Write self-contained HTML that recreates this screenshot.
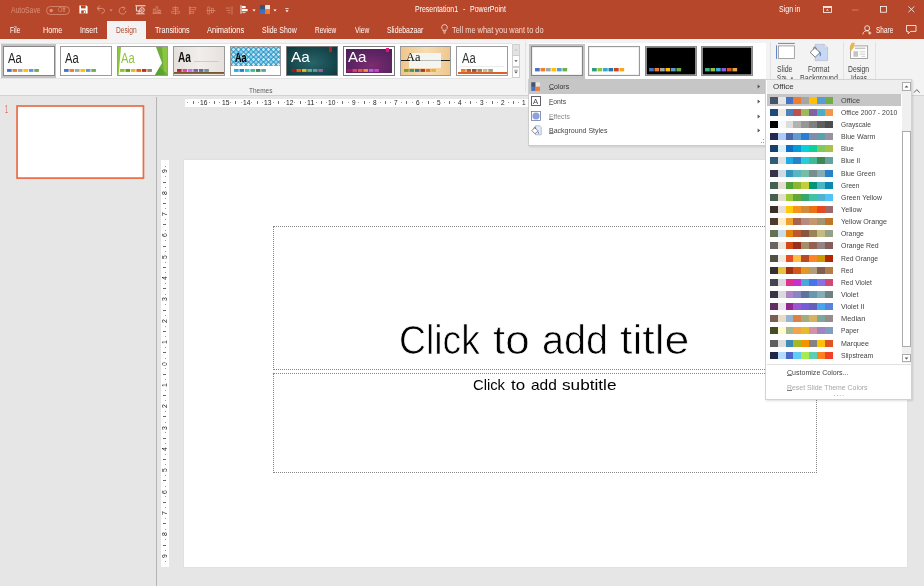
<!DOCTYPE html>
<html lang="en"><head><meta charset="utf-8"><title>Presentation1 - PowerPoint</title>
<style>
html,body{margin:0;padding:0;}
body{width:924px;height:586px;overflow:hidden;position:relative;background:#E6E6E6;font-family:"Liberation Sans",sans-serif;}
.a{position:absolute;box-sizing:border-box;}
.t{position:absolute;white-space:pre;transform-origin:0 50%;font-family:"Liberation Sans",sans-serif;}
.sw{position:absolute;height:7px;width:63.2px;left:769.8px;}
.sw i{position:absolute;top:0;height:100%;width:7.9px;}
.g{position:static;margin:0;padding:0;}
.chips{position:absolute;height:3px;}
.chips i{position:absolute;top:0;height:100%;width:4.5px;}
.th{position:absolute;top:46.3px;height:29.3px;width:51.7px;box-sizing:border-box;border:1px solid #9a9a9a;background:#fff;overflow:hidden;}
u{text-decoration:underline;text-decoration-thickness:0.5px;text-underline-offset:0.3px;text-decoration-color:rgba(80,80,80,0.75);}
</style></head><body><div id="root" style="position:absolute;left:0;top:0;width:924px;height:586px;will-change:transform;">
<div class="a" style="left:0px;top:0px;width:924px;height:39px;background:#B7472A;"></div>
<div class="a" style="left:107px;top:21px;width:39px;height:18.5px;background:#F3F3F3;"></div>
<div class="a" style="left:0px;top:39px;width:924px;height:56px;background:#F3F3F3;"></div>
<div class="a" style="left:0px;top:95px;width:924px;height:1px;background:#D2D2D2;"></div>
<div class="a" style="left:156px;top:97px;width:1px;height:489px;background:#B4B4B4;"></div>
<svg class="a" style="left:14px;top:103px" width="134" height="80" viewBox="0 0 134 80"><rect x="3.05" y="3" width="126.4" height="72.1" fill="#fff" stroke="#EC6C45" stroke-width="1.7"/></svg>
<div class="a" style="left:184.5px;top:99px;width:722.5px;height:8px;background:#fff;"></div>
<div class="a" style="left:161px;top:160px;width:8px;height:407px;background:#fff;"></div>
<div class="a" style="left:184px;top:160px;width:722.6px;height:407px;background:#fff;box-shadow:0 0 0 0.5px #dcdcdc;"></div>
<div class="a" style="left:273px;top:226px;width:544px;height:144px;border:1px dotted #858585;"></div>
<div class="a" style="left:273px;top:373px;width:544px;height:99.5px;border:1px dotted #858585;"></div>
<div class="a" style="left:187.4px;top:102.2px;width:1px;height:1px;background:#a0a0a0"></div><div class="a" style="left:192.7px;top:101px;width:1px;height:3px;background:#707070"></div><div class="a" style="left:198.1px;top:102.2px;width:1px;height:1px;background:#a0a0a0"></div><div class="a" style="left:208.7px;top:102.2px;width:1px;height:1px;background:#a0a0a0"></div><div class="a" style="left:214.1px;top:101px;width:1px;height:3px;background:#707070"></div><div class="a" style="left:219.4px;top:102.2px;width:1px;height:1px;background:#a0a0a0"></div><div class="a" style="left:230.1px;top:102.2px;width:1px;height:1px;background:#a0a0a0"></div><div class="a" style="left:235.4px;top:101px;width:1px;height:3px;background:#707070"></div><div class="a" style="left:240.8px;top:102.2px;width:1px;height:1px;background:#a0a0a0"></div><div class="a" style="left:251.4px;top:102.2px;width:1px;height:1px;background:#a0a0a0"></div><div class="a" style="left:256.8px;top:101px;width:1px;height:3px;background:#707070"></div><div class="a" style="left:262.1px;top:102.2px;width:1px;height:1px;background:#a0a0a0"></div><div class="a" style="left:272.8px;top:102.2px;width:1px;height:1px;background:#a0a0a0"></div><div class="a" style="left:278.1px;top:101px;width:1px;height:3px;background:#707070"></div><div class="a" style="left:283.5px;top:102.2px;width:1px;height:1px;background:#a0a0a0"></div><div class="a" style="left:294.1px;top:102.2px;width:1px;height:1px;background:#a0a0a0"></div><div class="a" style="left:299.5px;top:101px;width:1px;height:3px;background:#707070"></div><div class="a" style="left:304.8px;top:102.2px;width:1px;height:1px;background:#a0a0a0"></div><div class="a" style="left:315.5px;top:102.2px;width:1px;height:1px;background:#a0a0a0"></div><div class="a" style="left:320.8px;top:101px;width:1px;height:3px;background:#707070"></div><div class="a" style="left:326.2px;top:102.2px;width:1px;height:1px;background:#a0a0a0"></div><div class="a" style="left:336.8px;top:102.2px;width:1px;height:1px;background:#a0a0a0"></div><div class="a" style="left:342.2px;top:101px;width:1px;height:3px;background:#707070"></div><div class="a" style="left:347.5px;top:102.2px;width:1px;height:1px;background:#a0a0a0"></div><div class="a" style="left:358.2px;top:102.2px;width:1px;height:1px;background:#a0a0a0"></div><div class="a" style="left:363.5px;top:101px;width:1px;height:3px;background:#707070"></div><div class="a" style="left:368.9px;top:102.2px;width:1px;height:1px;background:#a0a0a0"></div><div class="a" style="left:379.5px;top:102.2px;width:1px;height:1px;background:#a0a0a0"></div><div class="a" style="left:384.9px;top:101px;width:1px;height:3px;background:#707070"></div><div class="a" style="left:390.2px;top:102.2px;width:1px;height:1px;background:#a0a0a0"></div><div class="a" style="left:400.9px;top:102.2px;width:1px;height:1px;background:#a0a0a0"></div><div class="a" style="left:406.2px;top:101px;width:1px;height:3px;background:#707070"></div><div class="a" style="left:411.6px;top:102.2px;width:1px;height:1px;background:#a0a0a0"></div><div class="a" style="left:422.2px;top:102.2px;width:1px;height:1px;background:#a0a0a0"></div><div class="a" style="left:427.6px;top:101px;width:1px;height:3px;background:#707070"></div><div class="a" style="left:432.9px;top:102.2px;width:1px;height:1px;background:#a0a0a0"></div><div class="a" style="left:443.6px;top:102.2px;width:1px;height:1px;background:#a0a0a0"></div><div class="a" style="left:448.9px;top:101px;width:1px;height:3px;background:#707070"></div><div class="a" style="left:454.3px;top:102.2px;width:1px;height:1px;background:#a0a0a0"></div><div class="a" style="left:464.9px;top:102.2px;width:1px;height:1px;background:#a0a0a0"></div><div class="a" style="left:470.3px;top:101px;width:1px;height:3px;background:#707070"></div><div class="a" style="left:475.6px;top:102.2px;width:1px;height:1px;background:#a0a0a0"></div><div class="a" style="left:486.3px;top:102.2px;width:1px;height:1px;background:#a0a0a0"></div><div class="a" style="left:491.6px;top:101px;width:1px;height:3px;background:#707070"></div><div class="a" style="left:497.0px;top:102.2px;width:1px;height:1px;background:#a0a0a0"></div><div class="a" style="left:507.6px;top:102.2px;width:1px;height:1px;background:#a0a0a0"></div><div class="a" style="left:513.0px;top:101px;width:1px;height:3px;background:#707070"></div><div class="a" style="left:518.3px;top:102.2px;width:1px;height:1px;background:#a0a0a0"></div><div class="a" style="left:529.0px;top:102.2px;width:1px;height:1px;background:#a0a0a0"></div><div class="a" style="left:534.3px;top:101px;width:1px;height:3px;background:#707070"></div><div class="a" style="left:539.7px;top:102.2px;width:1px;height:1px;background:#a0a0a0"></div><div class="a" style="left:550.3px;top:102.2px;width:1px;height:1px;background:#a0a0a0"></div><div class="a" style="left:555.7px;top:101px;width:1px;height:3px;background:#707070"></div><div class="a" style="left:561.0px;top:102.2px;width:1px;height:1px;background:#a0a0a0"></div><div class="a" style="left:571.7px;top:102.2px;width:1px;height:1px;background:#a0a0a0"></div><div class="a" style="left:577.0px;top:101px;width:1px;height:3px;background:#707070"></div><div class="a" style="left:582.4px;top:102.2px;width:1px;height:1px;background:#a0a0a0"></div><div class="a" style="left:593.0px;top:102.2px;width:1px;height:1px;background:#a0a0a0"></div><div class="a" style="left:598.4px;top:101px;width:1px;height:3px;background:#707070"></div><div class="a" style="left:603.7px;top:102.2px;width:1px;height:1px;background:#a0a0a0"></div><div class="a" style="left:614.4px;top:102.2px;width:1px;height:1px;background:#a0a0a0"></div><div class="a" style="left:619.7px;top:101px;width:1px;height:3px;background:#707070"></div><div class="a" style="left:625.1px;top:102.2px;width:1px;height:1px;background:#a0a0a0"></div><div class="a" style="left:635.7px;top:102.2px;width:1px;height:1px;background:#a0a0a0"></div><div class="a" style="left:641.1px;top:101px;width:1px;height:3px;background:#707070"></div><div class="a" style="left:646.4px;top:102.2px;width:1px;height:1px;background:#a0a0a0"></div><div class="a" style="left:657.1px;top:102.2px;width:1px;height:1px;background:#a0a0a0"></div><div class="a" style="left:662.4px;top:101px;width:1px;height:3px;background:#707070"></div><div class="a" style="left:667.8px;top:102.2px;width:1px;height:1px;background:#a0a0a0"></div><div class="a" style="left:678.4px;top:102.2px;width:1px;height:1px;background:#a0a0a0"></div><div class="a" style="left:683.8px;top:101px;width:1px;height:3px;background:#707070"></div><div class="a" style="left:689.1px;top:102.2px;width:1px;height:1px;background:#a0a0a0"></div><div class="a" style="left:699.8px;top:102.2px;width:1px;height:1px;background:#a0a0a0"></div><div class="a" style="left:705.1px;top:101px;width:1px;height:3px;background:#707070"></div><div class="a" style="left:710.5px;top:102.2px;width:1px;height:1px;background:#a0a0a0"></div><div class="a" style="left:721.1px;top:102.2px;width:1px;height:1px;background:#a0a0a0"></div><div class="a" style="left:726.5px;top:101px;width:1px;height:3px;background:#707070"></div><div class="a" style="left:731.8px;top:102.2px;width:1px;height:1px;background:#a0a0a0"></div><div class="a" style="left:742.5px;top:102.2px;width:1px;height:1px;background:#a0a0a0"></div><div class="a" style="left:747.8px;top:101px;width:1px;height:3px;background:#707070"></div><div class="a" style="left:753.2px;top:102.2px;width:1px;height:1px;background:#a0a0a0"></div><div class="a" style="left:763.8px;top:102.2px;width:1px;height:1px;background:#a0a0a0"></div><div class="a" style="left:769.2px;top:101px;width:1px;height:3px;background:#707070"></div><div class="a" style="left:774.5px;top:102.2px;width:1px;height:1px;background:#a0a0a0"></div><div class="a" style="left:785.2px;top:102.2px;width:1px;height:1px;background:#a0a0a0"></div><div class="a" style="left:790.5px;top:101px;width:1px;height:3px;background:#707070"></div><div class="a" style="left:795.9px;top:102.2px;width:1px;height:1px;background:#a0a0a0"></div><div class="a" style="left:806.5px;top:102.2px;width:1px;height:1px;background:#a0a0a0"></div><div class="a" style="left:811.9px;top:101px;width:1px;height:3px;background:#707070"></div><div class="a" style="left:817.2px;top:102.2px;width:1px;height:1px;background:#a0a0a0"></div><div class="a" style="left:827.9px;top:102.2px;width:1px;height:1px;background:#a0a0a0"></div><div class="a" style="left:833.2px;top:101px;width:1px;height:3px;background:#707070"></div><div class="a" style="left:838.6px;top:102.2px;width:1px;height:1px;background:#a0a0a0"></div><div class="a" style="left:849.2px;top:102.2px;width:1px;height:1px;background:#a0a0a0"></div><div class="a" style="left:854.6px;top:101px;width:1px;height:3px;background:#707070"></div><div class="a" style="left:859.9px;top:102.2px;width:1px;height:1px;background:#a0a0a0"></div><div class="a" style="left:870.6px;top:102.2px;width:1px;height:1px;background:#a0a0a0"></div><div class="a" style="left:875.9px;top:101px;width:1px;height:3px;background:#707070"></div><div class="a" style="left:881.3px;top:102.2px;width:1px;height:1px;background:#a0a0a0"></div><div class="a" style="left:891.9px;top:102.2px;width:1px;height:1px;background:#a0a0a0"></div><div class="a" style="left:897.3px;top:101px;width:1px;height:3px;background:#707070"></div><div class="a" style="left:902.6px;top:102.2px;width:1px;height:1px;background:#a0a0a0"></div><div class="a" style="top:165.5px;left:164.6px;width:1px;height:1px;background:#999"></div><div class="a" style="top:176.2px;left:164.6px;width:1px;height:1px;background:#999"></div><div class="a" style="top:181.5px;left:163.4px;width:3px;height:1px;background:#666"></div><div class="a" style="top:186.9px;left:164.6px;width:1px;height:1px;background:#999"></div><div class="a" style="top:197.5px;left:164.6px;width:1px;height:1px;background:#999"></div><div class="a" style="top:202.9px;left:163.4px;width:3px;height:1px;background:#666"></div><div class="a" style="top:208.2px;left:164.6px;width:1px;height:1px;background:#999"></div><div class="a" style="top:218.9px;left:164.6px;width:1px;height:1px;background:#999"></div><div class="a" style="top:224.2px;left:163.4px;width:3px;height:1px;background:#666"></div><div class="a" style="top:229.6px;left:164.6px;width:1px;height:1px;background:#999"></div><div class="a" style="top:240.2px;left:164.6px;width:1px;height:1px;background:#999"></div><div class="a" style="top:245.6px;left:163.4px;width:3px;height:1px;background:#666"></div><div class="a" style="top:250.9px;left:164.6px;width:1px;height:1px;background:#999"></div><div class="a" style="top:261.6px;left:164.6px;width:1px;height:1px;background:#999"></div><div class="a" style="top:266.9px;left:163.4px;width:3px;height:1px;background:#666"></div><div class="a" style="top:272.3px;left:164.6px;width:1px;height:1px;background:#999"></div><div class="a" style="top:282.9px;left:164.6px;width:1px;height:1px;background:#999"></div><div class="a" style="top:288.3px;left:163.4px;width:3px;height:1px;background:#666"></div><div class="a" style="top:293.6px;left:164.6px;width:1px;height:1px;background:#999"></div><div class="a" style="top:304.3px;left:164.6px;width:1px;height:1px;background:#999"></div><div class="a" style="top:309.6px;left:163.4px;width:3px;height:1px;background:#666"></div><div class="a" style="top:315.0px;left:164.6px;width:1px;height:1px;background:#999"></div><div class="a" style="top:325.6px;left:164.6px;width:1px;height:1px;background:#999"></div><div class="a" style="top:331.0px;left:163.4px;width:3px;height:1px;background:#666"></div><div class="a" style="top:336.3px;left:164.6px;width:1px;height:1px;background:#999"></div><div class="a" style="top:347.0px;left:164.6px;width:1px;height:1px;background:#999"></div><div class="a" style="top:352.3px;left:163.4px;width:3px;height:1px;background:#666"></div><div class="a" style="top:357.7px;left:164.6px;width:1px;height:1px;background:#999"></div><div class="a" style="top:368.3px;left:164.6px;width:1px;height:1px;background:#999"></div><div class="a" style="top:373.7px;left:163.4px;width:3px;height:1px;background:#666"></div><div class="a" style="top:379.0px;left:164.6px;width:1px;height:1px;background:#999"></div><div class="a" style="top:389.7px;left:164.6px;width:1px;height:1px;background:#999"></div><div class="a" style="top:395.0px;left:163.4px;width:3px;height:1px;background:#666"></div><div class="a" style="top:400.4px;left:164.6px;width:1px;height:1px;background:#999"></div><div class="a" style="top:411.0px;left:164.6px;width:1px;height:1px;background:#999"></div><div class="a" style="top:416.4px;left:163.4px;width:3px;height:1px;background:#666"></div><div class="a" style="top:421.7px;left:164.6px;width:1px;height:1px;background:#999"></div><div class="a" style="top:432.4px;left:164.6px;width:1px;height:1px;background:#999"></div><div class="a" style="top:437.7px;left:163.4px;width:3px;height:1px;background:#666"></div><div class="a" style="top:443.1px;left:164.6px;width:1px;height:1px;background:#999"></div><div class="a" style="top:453.7px;left:164.6px;width:1px;height:1px;background:#999"></div><div class="a" style="top:459.1px;left:163.4px;width:3px;height:1px;background:#666"></div><div class="a" style="top:464.4px;left:164.6px;width:1px;height:1px;background:#999"></div><div class="a" style="top:475.1px;left:164.6px;width:1px;height:1px;background:#999"></div><div class="a" style="top:480.4px;left:163.4px;width:3px;height:1px;background:#666"></div><div class="a" style="top:485.8px;left:164.6px;width:1px;height:1px;background:#999"></div><div class="a" style="top:496.4px;left:164.6px;width:1px;height:1px;background:#999"></div><div class="a" style="top:501.8px;left:163.4px;width:3px;height:1px;background:#666"></div><div class="a" style="top:507.1px;left:164.6px;width:1px;height:1px;background:#999"></div><div class="a" style="top:517.8px;left:164.6px;width:1px;height:1px;background:#999"></div><div class="a" style="top:523.1px;left:163.4px;width:3px;height:1px;background:#666"></div><div class="a" style="top:528.5px;left:164.6px;width:1px;height:1px;background:#999"></div><div class="a" style="top:539.1px;left:164.6px;width:1px;height:1px;background:#999"></div><div class="a" style="top:544.5px;left:163.4px;width:3px;height:1px;background:#666"></div><div class="a" style="top:549.8px;left:164.6px;width:1px;height:1px;background:#999"></div><div class="a" style="top:560.5px;left:164.6px;width:1px;height:1px;background:#999"></div>
<div class="a" style="left:0px;top:43.4px;width:511.5px;height:35.6px;background:#fff;border-top:1px solid #e4e4e4;border-bottom:1px solid #e4e4e4;"></div>
<div class="a" style="left:1.3px;top:44.3px;width:54.7px;height:33.5px;background:#C4C4C4;"></div>
<div class="th" style="left:3.3px;border-color:#858585;"><span class="t" style="left:3.8px;top:3.3px;font-size:14px;line-height:14px;color:#222;transform:scaleX(0.8);">Aa</span><svg class="a" style="left:2.9px;top:21.6px" width="32.82" height="2.9" viewBox="0 0 32.82 2.9"><rect x="0.00" y="0" width="4.6" height="2.9" fill="#4472C4"/><rect x="5.47" y="0" width="4.6" height="2.9" fill="#ED7D31"/><rect x="10.94" y="0" width="4.6" height="2.9" fill="#A5A5A5"/><rect x="16.41" y="0" width="4.6" height="2.9" fill="#FFC000"/><rect x="21.88" y="0" width="4.6" height="2.9" fill="#5B9BD5"/><rect x="27.35" y="0" width="4.6" height="2.9" fill="#70AD47"/></svg></div>
<div class="th" style="left:59.9px;"><span class="t" style="left:3.8px;top:3.3px;font-size:14px;line-height:14px;color:#222;transform:scaleX(0.8);">Aa</span><svg class="a" style="left:2.9px;top:21.6px" width="32.82" height="2.9" viewBox="0 0 32.82 2.9"><rect x="0.00" y="0" width="4.6" height="2.9" fill="#4472C4"/><rect x="5.47" y="0" width="4.6" height="2.9" fill="#ED7D31"/><rect x="10.94" y="0" width="4.6" height="2.9" fill="#A5A5A5"/><rect x="16.41" y="0" width="4.6" height="2.9" fill="#FFC000"/><rect x="21.88" y="0" width="4.6" height="2.9" fill="#5B9BD5"/><rect x="27.35" y="0" width="4.6" height="2.9" fill="#70AD47"/></svg></div>
<div class="th" style="left:116.5px;"><svg class="a" style="left:0;top:0" width="50" height="28" viewBox="0 0 50 28"><polygon points="0,0 3,0 0.6,28 0,28" fill="#8CC63F"/><polygon points="38,0 50,0 50,28 37,28 44,16" fill="#6FAE3A"/><polygon points="44,0 50,0 50,28 46,28" fill="#8CC63F"/><polygon points="37,28 44,16 41.5,20 50,28" fill="#4E9A34" opacity="0.6"/></svg><span class="t" style="left:3.6px;top:3.3px;font-size:14px;line-height:14px;color:#8FC43C;transform:scaleX(0.8);">Aa</span><svg class="a" style="left:2.9px;top:21.6px" width="32.82" height="2.9" viewBox="0 0 32.82 2.9"><rect x="0.00" y="0" width="4.6" height="2.9" fill="#90C226"/><rect x="5.47" y="0" width="4.6" height="2.9" fill="#54A021"/><rect x="10.94" y="0" width="4.6" height="2.9" fill="#E6B91E"/><rect x="16.41" y="0" width="4.6" height="2.9" fill="#E76618"/><rect x="21.88" y="0" width="4.6" height="2.9" fill="#C42F1A"/><rect x="27.35" y="0" width="4.6" height="2.9" fill="#918655"/></svg></div>
<div class="th" style="left:173.1px;"><div class="a" style="left:0;top:0;width:50px;height:28px;background:linear-gradient(90deg,#e4dfdb,#f1eeeb 50%,#e6e1dd)"></div><div class="a" style="left:0;top:24.8px;width:50px;height:2.4px;background:linear-gradient(#6f4d25,#9a7238)"></div><div class="a" style="left:20px;top:13.6px;width:25px;height:0.6px;background:#e9bfc5"></div><span class="t" style="left:3.8px;top:3.2px;font-size:14px;line-height:14px;color:#111;transform:scaleX(0.8);font-weight:bold;transform:scaleX(0.72);">Aa</span><svg class="a" style="left:3.4px;top:21.6px" width="32.82" height="2.9" viewBox="0 0 32.82 2.9"><rect x="0.00" y="0" width="4.6" height="2.9" fill="#B71E42"/><rect x="5.47" y="0" width="4.6" height="2.9" fill="#DE478E"/><rect x="10.94" y="0" width="4.6" height="2.9" fill="#BC72F0"/><rect x="16.41" y="0" width="4.6" height="2.9" fill="#795FAF"/><rect x="21.88" y="0" width="4.6" height="2.9" fill="#586EA6"/><rect x="27.35" y="0" width="4.6" height="2.9" fill="#6892A0"/></svg></div>
<div class="th" style="left:229.7px;"><div class="a" style="left:0;top:0;width:50px;height:19px;background-color:#2F9ACC;background-image:radial-gradient(circle at 50% 50%,#c4e5f4 0 1px,transparent 1.6px),radial-gradient(circle at 50% 50%,#a5d7ee 0 1px,transparent 1.6px);background-size:5px 5px,5px 5px;background-position:0 0,2.5px 2.5px"></div><span class="t" style="left:4px;top:4.2px;font-size:13px;line-height:13px;color:#000;transform:scaleX(0.8);font-weight:bold;transform:scaleX(0.7);">Aa</span><svg class="a" style="left:3.6px;top:21.6px" width="32.82" height="2.9" viewBox="0 0 32.82 2.9"><rect x="0.00" y="0" width="4.6" height="2.9" fill="#1CADE4"/><rect x="5.47" y="0" width="4.6" height="2.9" fill="#2683C6"/><rect x="10.94" y="0" width="4.6" height="2.9" fill="#27CED7"/><rect x="16.41" y="0" width="4.6" height="2.9" fill="#42BA97"/><rect x="21.88" y="0" width="4.6" height="2.9" fill="#3E8853"/><rect x="27.35" y="0" width="4.6" height="2.9" fill="#62A39F"/></svg></div>
<div class="th" style="left:286.3px;border-color:#7a7a7a;"><div class="a" style="left:0;top:0;width:50px;height:28px;background:radial-gradient(ellipse at 50% 55%,#27656a,#154449 70%,#0f383d)"></div><div class="a" style="left:42px;top:0;width:3px;height:5px;background:#c8191e"></div><span class="t" style="left:4.2px;top:2.6px;font-size:14.5px;line-height:14.5px;color:#fff;transform:scaleX(0.8);transform:scaleX(1.06);">Aa</span><svg class="a" style="left:3.8px;top:21.6px" width="32.82" height="2.9" viewBox="0 0 32.82 2.9"><rect x="0.00" y="0" width="4.6" height="2.9" fill="#B01513"/><rect x="5.47" y="0" width="4.6" height="2.9" fill="#EA6312"/><rect x="10.94" y="0" width="4.6" height="2.9" fill="#E6B729"/><rect x="16.41" y="0" width="4.6" height="2.9" fill="#6AAC90"/><rect x="21.88" y="0" width="4.6" height="2.9" fill="#5F9C9D"/><rect x="27.35" y="0" width="4.6" height="2.9" fill="#9E5E9B"/></svg></div>
<div class="th" style="left:342.9px;border-color:#7a7a7a;"><div class="a" style="left:2px;top:2.2px;width:45.7px;height:23.4px;background:radial-gradient(ellipse at 55% 70%,#7d2c70,#55225f 70%,#4b1e57)"></div><div class="a" style="left:42px;top:0.6px;width:3px;height:4.5px;background:#e0157c"></div><span class="t" style="left:4.4px;top:2.6px;font-size:14.5px;line-height:14.5px;color:#fff;transform:scaleX(0.8);transform:scaleX(1.04);">Aa</span><svg class="a" style="left:3.6px;top:21.6px" width="32.82" height="2.9" viewBox="0 0 32.82 2.9"><rect x="0.00" y="0" width="4.6" height="2.9" fill="#B31166"/><rect x="5.47" y="0" width="4.6" height="2.9" fill="#E33D6F"/><rect x="10.94" y="0" width="4.6" height="2.9" fill="#E45F3C"/><rect x="16.41" y="0" width="4.6" height="2.9" fill="#E9943A"/><rect x="21.88" y="0" width="4.6" height="2.9" fill="#9B6BF2"/><rect x="27.35" y="0" width="4.6" height="2.9" fill="#D53DD0"/></svg></div>
<div class="th" style="left:399.5px;"><div class="a" style="left:0;top:0;width:50px;height:28px;background:linear-gradient(90deg,#efc68c,#f6ddb4 50%,#efc68c)"></div><div class="a" style="left:8.4px;top:5.3px;width:31.7px;height:15px;background:#f4f4f1"></div><div class="a" style="left:0;top:12.8px;width:50px;height:1.4px;background:linear-gradient(90deg,#222 0 18%,#bbb 18% 80%,#222 80%)"></div><span class="t" style="left:5px;top:3px;font-size:13px;line-height:13px;color:#111;font-family:'Liberation Serif',serif;transform:scaleX(0.95);">Aa</span><svg class="a" style="left:3.2px;top:21.6px" width="32.82" height="2.9" viewBox="0 0 32.82 2.9"><rect x="0.00" y="0" width="4.6" height="2.9" fill="#83992A"/><rect x="5.47" y="0" width="4.6" height="2.9" fill="#3C9770"/><rect x="10.94" y="0" width="4.6" height="2.9" fill="#44709D"/><rect x="16.41" y="0" width="4.6" height="2.9" fill="#A23C33"/><rect x="21.88" y="0" width="4.6" height="2.9" fill="#D97828"/><rect x="27.35" y="0" width="4.6" height="2.9" fill="#DEB340"/></svg></div>
<div class="th" style="left:456.1px;"><div class="a" style="left:0.5px;top:25px;width:49px;height:1.8px;background:#D8612C"></div><div class="a" style="left:3px;top:18.5px;width:44px;height:0.5px;background:#ececec"></div><span class="t" style="left:4.6px;top:3.3px;font-size:14px;line-height:14px;color:#333;transform:scaleX(0.8);">Aa</span><svg class="a" style="left:3.6px;top:21.6px" width="32.82" height="2.9" viewBox="0 0 32.82 2.9"><rect x="0.00" y="0" width="4.6" height="2.9" fill="#E48312"/><rect x="5.47" y="0" width="4.6" height="2.9" fill="#BD582C"/><rect x="10.94" y="0" width="4.6" height="2.9" fill="#865640"/><rect x="16.41" y="0" width="4.6" height="2.9" fill="#9B8357"/><rect x="21.88" y="0" width="4.6" height="2.9" fill="#C2BC80"/><rect x="27.35" y="0" width="4.6" height="2.9" fill="#94A088"/></svg></div>
<div class="a" style="left:512px;top:43.5px;width:8px;height:12.0px;background:#E3E3E3;border:1px solid #d0d0d0;"></div>
<div class="a" style="left:512px;top:55px;width:8px;height:12px;background:#fff;border:1px solid #cfcfcf;"></div>
<div class="a" style="left:512px;top:66.5px;width:8px;height:11.5px;background:#fff;border:1px solid #cfcfcf;"></div>
<svg class="a" style="left:512px;top:43px" width="8" height="36" viewBox="0 0 8 36"><path d="M2.6 7 L5.4 7" stroke="#b0b0b0" stroke-width="0.6"/><path d="M2.3 17.2 L5.7 17.2 L4 19 Z" fill="#555"/><path d="M2.2 27.2 H5.8" stroke="#555" stroke-width="0.6"/><path d="M2.3 28.6 L5.7 28.6 L4 30.4 Z" fill="#555"/></svg>
<div class="a" style="left:524.5px;top:42px;width:1.0px;height:50px;background:#E2E2E2;"></div>
<div class="a" style="left:528.5px;top:43px;width:237.5px;height:36.5px;background:#fff;"></div>
<div class="a" style="left:529px;top:44.3px;width:56px;height:34.7px;background:#C4C4C4;"></div>
<div class="th" style="left:531px;width:52px;background:#fff;border-color:#858585;box-shadow:inset 0 0 0 0.6px #e4e4e4"><svg class="a" style="left:2.9px;top:20.9px" width="33.00" height="3.4" viewBox="0 0 33.00 3.4"><rect x="0.00" y="0" width="4.7" height="3.4" fill="#4472C4"/><rect x="5.50" y="0" width="4.7" height="3.4" fill="#ED7D31"/><rect x="11.00" y="0" width="4.7" height="3.4" fill="#A5A5A5"/><rect x="16.50" y="0" width="4.7" height="3.4" fill="#FFC000"/><rect x="22.00" y="0" width="4.7" height="3.4" fill="#5B9BD5"/><rect x="27.50" y="0" width="4.7" height="3.4" fill="#70AD47"/></svg></div>
<div class="th" style="left:588px;width:52px;background:#fff;border-color:#9a9a9a;box-shadow:inset 0 0 0 0.6px #e4e4e4"><svg class="a" style="left:2.9px;top:20.9px" width="33.00" height="3.4" viewBox="0 0 33.00 3.4"><rect x="0.00" y="0" width="4.7" height="3.4" fill="#2E9B7C"/><rect x="5.50" y="0" width="4.7" height="3.4" fill="#8DC63F"/><rect x="11.00" y="0" width="4.7" height="3.4" fill="#35A5D8"/><rect x="16.50" y="0" width="4.7" height="3.4" fill="#1F78B4"/><rect x="22.00" y="0" width="4.7" height="3.4" fill="#C8461A"/><rect x="27.50" y="0" width="4.7" height="3.4" fill="#F5A623"/></svg></div>
<div class="th" style="left:645px;width:52px;background:#000;border-color:#8a8a8a;box-shadow:inset 0 0 0 0.6px #e4e4e4"><svg class="a" style="left:2.9px;top:20.9px" width="33.00" height="3.4" viewBox="0 0 33.00 3.4"><rect x="0.00" y="0" width="4.7" height="3.4" fill="#4472C4"/><rect x="5.50" y="0" width="4.7" height="3.4" fill="#ED7D31"/><rect x="11.00" y="0" width="4.7" height="3.4" fill="#A5A5A5"/><rect x="16.50" y="0" width="4.7" height="3.4" fill="#FFC000"/><rect x="22.00" y="0" width="4.7" height="3.4" fill="#5B9BD5"/><rect x="27.50" y="0" width="4.7" height="3.4" fill="#70AD47"/></svg></div>
<div class="th" style="left:701px;width:52px;background:#000;border-color:#8a8a8a;box-shadow:inset 0 0 0 0.6px #e4e4e4"><svg class="a" style="left:2.9px;top:20.9px" width="33.00" height="3.4" viewBox="0 0 33.00 3.4"><rect x="0.00" y="0" width="4.7" height="3.4" fill="#3CB488"/><rect x="5.50" y="0" width="4.7" height="3.4" fill="#8CC152"/><rect x="11.00" y="0" width="4.7" height="3.4" fill="#3FA9E0"/><rect x="16.50" y="0" width="4.7" height="3.4" fill="#8E5BD0"/><rect x="22.00" y="0" width="4.7" height="3.4" fill="#D9541E"/><rect x="27.50" y="0" width="4.7" height="3.4" fill="#E8A33D"/></svg></div>
<div class="a" style="left:770px;top:42px;width:1px;height:50px;background:#E2E2E2;"></div>
<div class="a" style="left:843px;top:42px;width:1px;height:50px;background:#E2E2E2;"></div>
<div class="a" style="left:875px;top:42px;width:1px;height:50px;background:#E2E2E2;"></div>
<svg class="a" style="left:775px;top:42px" width="22" height="18" viewBox="0 0 22 18"><rect x="3.4" y="3.9" width="16" height="12.6" fill="#fff" stroke="#9c9c9c" stroke-width="0.9"/><path d="M3 1.4 H19.8" stroke="#4f7bc4" stroke-width="0.9"/><path d="M1.5 3.4 V16.9" stroke="#4f7bc4" stroke-width="0.9"/></svg>
<svg class="a" style="left:808px;top:43px" width="22" height="19" viewBox="0 0 22 19"><path d="M7.2 1.4 H16.2 L19.6 4.8 V17.6 H7.2 Z" fill="#c9d8f0" stroke="#a9b4c8" stroke-width="0.6"/><path d="M16.2 1.4 V4.8 H19.6 Z" fill="#f4f7fc" stroke="#a9b4c8" stroke-width="0.5"/><path d="M2.2 9.4 L7 4.6 L12 9.6 L7.2 14.2 Z" fill="#fff" stroke="#5e5e5e" stroke-width="0.8"/><path d="M5.6 6.4 C4.6 3.2 8.6 2.8 8.2 6.8" fill="none" stroke="#5e5e5e" stroke-width="0.7"/><path d="M11.2 8.4 C13 9.6 13 12.4 12 13.2 C12.4 11.6 12 10 11.2 8.4Z" fill="#3f78cf" stroke="#3f78cf" stroke-width="0.5"/></svg>
<svg class="a" style="left:848px;top:42px" width="22" height="18" viewBox="0 0 22 18"><rect x="2.6" y="3.9" width="17" height="12.6" fill="#fff" stroke="#9c9c9c" stroke-width="0.9"/><rect x="7" y="5.6" width="10.4" height="1.5" fill="#c4c4c4"/><rect x="5.4" y="9.2" width="4.7" height="5.6" fill="#c4c4c4"/><path d="M11.6 9.8 H17.2 M11.6 12.1 H17.2 M13.4 14.3 H17.2" stroke="#c0c0c0" stroke-width="0.8"/><path d="M3.6 0.8 L7.2 0.8 L5 4.6 L6.6 4.6 L1.6 11 L3 6.6 L1.4 6.6 Z" fill="#F2B441"/></svg>
<svg class="a" style="left:913px;top:87.5px" width="8" height="6" viewBox="0 0 8 6"><path d="M1 4.6 L3.8 1.6 L6.6 4.6" fill="none" stroke="#555" stroke-width="0.9"/></svg>

<svg class="a" style="left:45.6px;top:5.8px" width="24" height="9" viewBox="0 0 24 9"><rect x="0.5" y="0.5" width="23" height="8" rx="4" fill="none" stroke="#D9917A" stroke-width="0.8"/><circle cx="5.2" cy="4.5" r="1.7" fill="#D9917A"/></svg>
<svg class="a" style="left:78.6px;top:5.4px" width="9" height="9" viewBox="0 0 9 9"><path d="M0.4 0.4 H7.4 L8.6 1.6 V8.6 H0.4 Z" fill="#fff"/><rect x="2" y="0.4" width="4.6" height="3" fill="#B7472A"/><rect x="2.2" y="5.4" width="4.4" height="3.2" fill="#B7472A"/><rect x="4.8" y="5.9" width="1.2" height="2.2" fill="#fff"/></svg>
<svg class="a" style="left:96px;top:5.1px" width="10" height="9" viewBox="0 0 10 9"><path d="M1 3.4 H5.6 C9.6 3.4 9.4 8.2 5.4 8.2" fill="none" stroke="#D9917A" stroke-width="1"/><path d="M3.8 0.8 L1 3.4 L3.8 6" fill="none" stroke="#D9917A" stroke-width="1"/></svg>
<svg class="a" style="left:108.6px;top:8.8px" width="4" height="3" viewBox="0 0 4 3"><path d="M0.4 0.4 H3.6 L2 2.4Z" fill="#D9917A"/></svg>
<svg class="a" style="left:117.8px;top:5.6px" width="9" height="9" viewBox="0 0 9 9"><path d="M6.8 2.2 A3.4 3.4 0 1 0 7.9 4.8" fill="none" stroke="#D9917A" stroke-width="0.9"/><path d="M4.8 0.6 L7.2 2.4 L5 4" fill="none" stroke="#D9917A" stroke-width="0.8"/></svg>
<svg class="a" style="left:134.6px;top:5.4px" width="11" height="10" viewBox="0 0 11 10"><path d="M0.4 0.8 H10.4" stroke="#fff" stroke-width="0.9"/><path d="M1.4 1.2 V6 H5" fill="none" stroke="#fff" stroke-width="0.8"/><circle cx="7" cy="5" r="2.3" fill="none" stroke="#fff" stroke-width="0.8"/><path d="M6.4 3.9 L8 5 L6.4 6.1Z" fill="#fff"/><path d="M1.2 8.8 H9.6" stroke="#fff" stroke-width="0.8"/><path d="M4 6 V8.6" stroke="#fff" stroke-width="0.7"/></svg>
<svg class="a" style="left:152.4px;top:5.6px" width="10" height="9" viewBox="0 0 10 9"><path d="M0.4 7.4 H9.6" stroke="#D9917A" stroke-width="0.7"/><rect x="1.2" y="3" width="1.8" height="4" fill="none" stroke="#D9917A" stroke-width="0.6"/><rect x="4" y="0.8" width="1.8" height="6.2" fill="none" stroke="#D9917A" stroke-width="0.6"/><rect x="6.8" y="4" width="1.8" height="3" fill="none" stroke="#D9917A" stroke-width="0.6"/></svg>
<svg class="a" style="left:170.6px;top:5.6px" width="9" height="9" viewBox="0 0 9 9"><path d="M4.5 0.2 V8.8" stroke="#D9917A" stroke-width="0.7"/><rect x="2" y="1.6" width="5" height="2" fill="none" stroke="#D9917A" stroke-width="0.6"/><rect x="0.8" y="5.2" width="7.4" height="2" fill="none" stroke="#D9917A" stroke-width="0.6"/></svg>
<svg class="a" style="left:188.2px;top:5.6px" width="9" height="9" viewBox="0 0 9 9"><path d="M1.4 0.2 V8.8" stroke="#D9917A" stroke-width="0.7"/><rect x="2.2" y="1.6" width="5.6" height="2" fill="none" stroke="#D9917A" stroke-width="0.6"/><rect x="2.2" y="5.2" width="3.6" height="2" fill="none" stroke="#D9917A" stroke-width="0.6"/></svg>
<svg class="a" style="left:205.8px;top:5.6px" width="10" height="9" viewBox="0 0 10 9"><path d="M0.4 4.5 H9.6" stroke="#D9917A" stroke-width="0.7"/><rect x="1.8" y="1" width="2" height="7" fill="none" stroke="#D9917A" stroke-width="0.6"/><rect x="5.6" y="2.2" width="2" height="4.6" fill="none" stroke="#D9917A" stroke-width="0.6"/></svg>
<svg class="a" style="left:224.6px;top:5.6px" width="9" height="9" viewBox="0 0 9 9"><path d="M7 0.2 V8.8" stroke="#D9917A" stroke-width="0.7"/><path d="M0.6 2 H5.6 M1.4 4.4 H5.6 M2.8 6.8 H5.6" stroke="#D9917A" stroke-width="0.7"/></svg>
<svg class="a" style="left:240.4px;top:5.2px" width="9" height="9" viewBox="0 0 9 9"><path d="M1 0.2 V8.8" stroke="#fff" stroke-width="0.9"/><rect x="2" y="1" width="3.6" height="2.2" fill="#fff"/><rect x="2" y="4" width="5.6" height="2.2" fill="#fff"/><path d="M2.4 7.6 H5.4" stroke="#fff" stroke-width="0.8"/></svg>
<svg class="a" style="left:252.2px;top:8.8px" width="4" height="3" viewBox="0 0 4 3"><path d="M0.4 0.4 H3.6 L2 2.4Z" fill="#fff"/></svg>
<svg class="a" style="left:259.8px;top:5.3px" width="10.2" height="9" viewBox="0 0 10.2 9"><rect x="0" y="0" width="5.1" height="4.5" fill="#3F506A"/><rect x="5.1" y="0" width="5.1" height="4.5" fill="#E4E4E6"/><rect x="0" y="4.5" width="5.1" height="4.5" fill="#3D6FCB"/><rect x="5.1" y="4.5" width="5.1" height="4.5" fill="#F07C2C"/></svg>
<svg class="a" style="left:272.8px;top:8.8px" width="4" height="3" viewBox="0 0 4 3"><path d="M0.4 0.4 H3.6 L2 2.4Z" fill="#fff"/></svg>
<svg class="a" style="left:285.4px;top:7.6px" width="4" height="5" viewBox="0 0 4 5"><path d="M0.4 0.6 H3.6" stroke="#fff" stroke-width="0.8"/><path d="M0.4 2.2 H3.6 L2 4.2Z" fill="#fff"/></svg>
<svg class="a" style="left:440.6px;top:24.4px" width="7" height="10" viewBox="0 0 7 10"><path d="M3.5 0.6 A2.7 2.7 0 0 1 5 5.6 V6.8 H2 V5.6 A2.7 2.7 0 0 1 3.5 0.6Z" fill="none" stroke="#fff" stroke-width="0.7"/><path d="M2.2 8 H4.8 M2.6 9.2 H4.4" stroke="#fff" stroke-width="0.6"/></svg>
<svg class="a" style="left:822.8px;top:5.6px" width="9" height="7" viewBox="0 0 9 7"><rect x="0.4" y="0.4" width="8" height="6" fill="none" stroke="#fff" stroke-width="0.8"/><path d="M0.4 1.4 H8.4" stroke="#fff" stroke-width="0.9"/><path d="M3 4.6 L4.4 3 L5.8 4.6Z" fill="#fff"/></svg>
<svg class="a" style="left:852.4px;top:8.6px" width="7" height="2" viewBox="0 0 7 2"><path d="M0 1 H6.4" stroke="#D9917A" stroke-width="0.8"/></svg>
<svg class="a" style="left:880.2px;top:5.8px" width="7" height="7" viewBox="0 0 7 7"><rect x="0.4" y="0.4" width="6" height="5.8" fill="none" stroke="#fff" stroke-width="0.8"/></svg>
<svg class="a" style="left:908.2px;top:5.8px" width="7" height="7" viewBox="0 0 7 7"><path d="M0.4 0.4 L6.4 6.2 M6.4 0.4 L0.4 6.2" stroke="#fff" stroke-width="0.8"/></svg>
<svg class="a" style="left:861.6px;top:24.6px" width="10" height="10" viewBox="0 0 10 10"><circle cx="5.2" cy="3.2" r="2.5" fill="none" stroke="#fff" stroke-width="0.8"/><path d="M0.8 9.4 C1.2 6.6 3 5.8 5 5.8 C6 5.8 6.6 6 7 6.2" fill="none" stroke="#fff" stroke-width="0.8"/><path d="M6 8 H9.4 M7.7 6.4 V9.6" stroke="#fff" stroke-width="0.8"/></svg>
<svg class="a" style="left:905.8px;top:24.8px" width="11" height="10" viewBox="0 0 11 10"><path d="M0.5 0.5 H10 V6.4 H4.6 L2.2 8.8 V6.4 H0.5 Z" fill="none" stroke="#fff" stroke-width="0.8"/></svg>

<span class="t" style="left:161.4px;top:359.5px;width:8px;height:8px;line-height:8px;font-size:7.6px;color:#222;text-align:center;transform-origin:50% 50%;transform:rotate(-90deg) scaleX(0.9)">0</span><span class="t" style="left:161.4px;top:338.1px;width:8px;height:8px;line-height:8px;font-size:7.6px;color:#222;text-align:center;transform-origin:50% 50%;transform:rotate(-90deg) scaleX(0.9)">1</span><span class="t" style="left:161.4px;top:380.9px;width:8px;height:8px;line-height:8px;font-size:7.6px;color:#222;text-align:center;transform-origin:50% 50%;transform:rotate(-90deg) scaleX(0.9)">1</span><span class="t" style="left:161.4px;top:316.8px;width:8px;height:8px;line-height:8px;font-size:7.6px;color:#222;text-align:center;transform-origin:50% 50%;transform:rotate(-90deg) scaleX(0.9)">2</span><span class="t" style="left:161.4px;top:402.2px;width:8px;height:8px;line-height:8px;font-size:7.6px;color:#222;text-align:center;transform-origin:50% 50%;transform:rotate(-90deg) scaleX(0.9)">2</span><span class="t" style="left:161.4px;top:295.4px;width:8px;height:8px;line-height:8px;font-size:7.6px;color:#222;text-align:center;transform-origin:50% 50%;transform:rotate(-90deg) scaleX(0.9)">3</span><span class="t" style="left:161.4px;top:423.6px;width:8px;height:8px;line-height:8px;font-size:7.6px;color:#222;text-align:center;transform-origin:50% 50%;transform:rotate(-90deg) scaleX(0.9)">3</span><span class="t" style="left:161.4px;top:274.1px;width:8px;height:8px;line-height:8px;font-size:7.6px;color:#222;text-align:center;transform-origin:50% 50%;transform:rotate(-90deg) scaleX(0.9)">4</span><span class="t" style="left:161.4px;top:444.9px;width:8px;height:8px;line-height:8px;font-size:7.6px;color:#222;text-align:center;transform-origin:50% 50%;transform:rotate(-90deg) scaleX(0.9)">4</span><span class="t" style="left:161.4px;top:252.8px;width:8px;height:8px;line-height:8px;font-size:7.6px;color:#222;text-align:center;transform-origin:50% 50%;transform:rotate(-90deg) scaleX(0.9)">5</span><span class="t" style="left:161.4px;top:466.2px;width:8px;height:8px;line-height:8px;font-size:7.6px;color:#222;text-align:center;transform-origin:50% 50%;transform:rotate(-90deg) scaleX(0.9)">5</span><span class="t" style="left:161.4px;top:231.4px;width:8px;height:8px;line-height:8px;font-size:7.6px;color:#222;text-align:center;transform-origin:50% 50%;transform:rotate(-90deg) scaleX(0.9)">6</span><span class="t" style="left:161.4px;top:487.6px;width:8px;height:8px;line-height:8px;font-size:7.6px;color:#222;text-align:center;transform-origin:50% 50%;transform:rotate(-90deg) scaleX(0.9)">6</span><span class="t" style="left:161.4px;top:210.0px;width:8px;height:8px;line-height:8px;font-size:7.6px;color:#222;text-align:center;transform-origin:50% 50%;transform:rotate(-90deg) scaleX(0.9)">7</span><span class="t" style="left:161.4px;top:509.0px;width:8px;height:8px;line-height:8px;font-size:7.6px;color:#222;text-align:center;transform-origin:50% 50%;transform:rotate(-90deg) scaleX(0.9)">7</span><span class="t" style="left:161.4px;top:188.7px;width:8px;height:8px;line-height:8px;font-size:7.6px;color:#222;text-align:center;transform-origin:50% 50%;transform:rotate(-90deg) scaleX(0.9)">8</span><span class="t" style="left:161.4px;top:530.3px;width:8px;height:8px;line-height:8px;font-size:7.6px;color:#222;text-align:center;transform-origin:50% 50%;transform:rotate(-90deg) scaleX(0.9)">8</span><span class="t" style="left:161.4px;top:167.3px;width:8px;height:8px;line-height:8px;font-size:7.6px;color:#222;text-align:center;transform-origin:50% 50%;transform:rotate(-90deg) scaleX(0.9)">9</span><span class="t" style="left:161.4px;top:551.6px;width:8px;height:8px;line-height:8px;font-size:7.6px;color:#222;text-align:center;transform-origin:50% 50%;transform:rotate(-90deg) scaleX(0.9)">9</span>
<span class="t" style="left:11.30px;top:5.35px;font-size:8.4px;line-height:10.5px;color:#D9917A;transform:scaleX(0.8156);">AutoSave</span>
<span class="t" style="left:57.70px;top:6.35px;font-size:6.8px;line-height:8.5px;color:#D9917A;transform:scaleX(0.8396);">Off</span>
<div class="g"><span class="t" style="left:415.00px;top:4.15px;font-size:8.4px;line-height:10.5px;color:#fff;transform:scaleX(0.8342);">Presentation1</span> <span class="t" style="left:462.70px;top:4.35px;font-size:8.4px;line-height:10.5px;color:#fff;transform:scaleX(0.8667);">-</span> <span class="t" style="left:469.60px;top:4.15px;font-size:8.4px;line-height:10.5px;color:#fff;transform:scaleX(0.8368);">PowerPoint</span></div>
<span class="t" style="left:779.20px;top:4.35px;font-size:8.4px;line-height:10.5px;color:#fff;transform:scaleX(0.8401);">Sign in</span>
<span class="t" style="left:875.50px;top:24.95px;font-size:8.4px;line-height:10.5px;color:#fff;transform:scaleX(0.7712);">Share</span>
<span class="t" style="left:9.50px;top:24.95px;font-size:8.4px;line-height:10.5px;color:#fff;transform:scaleX(0.7588);">File</span>
<span class="t" style="left:42.50px;top:24.95px;font-size:8.4px;line-height:10.5px;color:#fff;transform:scaleX(0.8597);">Home</span>
<span class="t" style="left:79.50px;top:24.95px;font-size:8.4px;line-height:10.5px;color:#fff;transform:scaleX(0.8326);">Insert</span>
<span class="t" style="left:155.00px;top:24.95px;font-size:8.4px;line-height:10.5px;color:#fff;transform:scaleX(0.8527);">Transitions</span>
<span class="t" style="left:207.00px;top:24.95px;font-size:8.4px;line-height:10.5px;color:#fff;transform:scaleX(0.8971);">Animations</span>
<span class="t" style="left:261.50px;top:24.95px;font-size:8.4px;line-height:10.5px;color:#fff;transform:scaleX(0.8284);">Slide Show</span>
<span class="t" style="left:315.00px;top:24.95px;font-size:8.4px;line-height:10.5px;color:#fff;transform:scaleX(0.7743);">Review</span>
<span class="t" style="left:355.00px;top:24.95px;font-size:8.4px;line-height:10.5px;color:#fff;transform:scaleX(0.7914);">View</span>
<span class="t" style="left:387.00px;top:24.95px;font-size:8.4px;line-height:10.5px;color:#fff;transform:scaleX(0.8213);">Slidebazaar</span>
<span class="t" style="left:451.60px;top:24.95px;font-size:8.4px;line-height:10.5px;color:#F4D9D0;transform:scaleX(0.8863);">Tell me what you want to do</span>
<span class="t" style="left:116.00px;top:24.95px;font-size:8.4px;line-height:10.5px;color:#B7472A;transform:scaleX(0.7951);">Design</span>
<span class="t" style="left:249.00px;top:86.22px;font-size:7.8px;line-height:9.75px;color:#5a5a5a;transform:scaleX(0.8314);">Themes</span>
<div class="g"><span class="t" style="left:777.00px;top:64.05px;font-size:8.4px;line-height:10.5px;color:#444;transform:scaleX(0.8278);">Slide</span> <span class="t" style="left:777.00px;top:73.45px;font-size:8.4px;line-height:10.5px;color:#444;transform:scaleX(0.5891);">Size</span> <span class="t" style="left:790.20px;top:76.39px;font-size:4.5px;line-height:5.62px;color:#555;transform:scaleX(0.8500);">▼</span></div>
<div class="g"><span class="t" style="left:807.90px;top:64.05px;font-size:8.4px;line-height:10.5px;color:#444;transform:scaleX(0.8052);">Format</span> <span class="t" style="left:799.60px;top:73.45px;font-size:8.4px;line-height:10.5px;color:#444;transform:scaleX(0.8504);">Background</span></div>
<div class="g"><span class="t" style="left:848.30px;top:64.05px;font-size:8.4px;line-height:10.5px;color:#444;transform:scaleX(0.8102);">Design</span> <span class="t" style="left:850.60px;top:73.45px;font-size:8.4px;line-height:10.5px;color:#444;transform:scaleX(0.7832);">Ideas</span></div>
<span class="t" style="left:4.90px;top:103.65px;font-size:10px;line-height:12.5px;color:#E4633D;transform:scaleX(0.5333);">1</span>
<div class="g"><span class="t" style="left:398.93px;top:314.84px;font-size:40px;line-height:50.0px;color:#000;transform:scaleX(0.9339);-webkit-text-stroke:0.7px #fff;">Click</span> <span class="t" style="left:493.00px;top:314.84px;font-size:40px;line-height:50.0px;color:#000;transform:scaleX(1.0992);-webkit-text-stroke:0.7px #fff;">to</span> <span class="t" style="left:541.51px;top:314.84px;font-size:40px;line-height:50.0px;color:#000;transform:scaleX(0.9891);-webkit-text-stroke:0.7px #fff;">add</span> <span class="t" style="left:620.00px;top:314.84px;font-size:40px;line-height:50.0px;color:#000;transform:scaleX(1.1148);-webkit-text-stroke:0.7px #fff;">title</span></div>
<div class="g"><span class="t" style="left:473.00px;top:375.73px;font-size:15px;line-height:18.75px;color:#000;transform:scaleX(0.9849);">Click</span> <span class="t" style="left:511.00px;top:375.73px;font-size:15px;line-height:18.75px;color:#000;transform:scaleX(1.1260);">to</span> <span class="t" style="left:530.50px;top:375.73px;font-size:15px;line-height:18.75px;color:#000;transform:scaleX(1.0330);">add</span> <span class="t" style="left:562.20px;top:375.73px;font-size:15px;line-height:18.75px;color:#000;transform:scaleX(1.1466);">subtitle</span></div>
<span class="t" style="left:522.35px;top:97.90px;font-size:7.2px;line-height:9.0px;color:#222;transform:scaleX(0.9000);">1</span>
<span class="t" style="left:565.05px;top:97.90px;font-size:7.2px;line-height:9.0px;color:#222;transform:scaleX(0.9000);">1</span>
<span class="t" style="left:501.00px;top:97.90px;font-size:7.2px;line-height:9.0px;color:#222;transform:scaleX(0.9000);">2</span>
<span class="t" style="left:586.40px;top:97.90px;font-size:7.2px;line-height:9.0px;color:#222;transform:scaleX(0.9000);">2</span>
<span class="t" style="left:479.65px;top:97.90px;font-size:7.2px;line-height:9.0px;color:#222;transform:scaleX(0.9000);">3</span>
<span class="t" style="left:607.75px;top:97.90px;font-size:7.2px;line-height:9.0px;color:#222;transform:scaleX(0.9000);">3</span>
<span class="t" style="left:458.30px;top:97.90px;font-size:7.2px;line-height:9.0px;color:#222;transform:scaleX(0.9000);">4</span>
<span class="t" style="left:629.10px;top:97.90px;font-size:7.2px;line-height:9.0px;color:#222;transform:scaleX(0.9000);">4</span>
<span class="t" style="left:436.95px;top:97.90px;font-size:7.2px;line-height:9.0px;color:#222;transform:scaleX(0.9000);">5</span>
<span class="t" style="left:650.45px;top:97.90px;font-size:7.2px;line-height:9.0px;color:#222;transform:scaleX(0.9000);">5</span>
<span class="t" style="left:415.60px;top:97.90px;font-size:7.2px;line-height:9.0px;color:#222;transform:scaleX(0.9000);">6</span>
<span class="t" style="left:671.80px;top:97.90px;font-size:7.2px;line-height:9.0px;color:#222;transform:scaleX(0.9000);">6</span>
<span class="t" style="left:394.25px;top:97.90px;font-size:7.2px;line-height:9.0px;color:#222;transform:scaleX(0.9000);">7</span>
<span class="t" style="left:693.15px;top:97.90px;font-size:7.2px;line-height:9.0px;color:#222;transform:scaleX(0.9000);">7</span>
<span class="t" style="left:372.90px;top:97.90px;font-size:7.2px;line-height:9.0px;color:#222;transform:scaleX(0.9000);">8</span>
<span class="t" style="left:714.50px;top:97.90px;font-size:7.2px;line-height:9.0px;color:#222;transform:scaleX(0.9000);">8</span>
<span class="t" style="left:351.55px;top:97.90px;font-size:7.2px;line-height:9.0px;color:#222;transform:scaleX(0.9000);">9</span>
<span class="t" style="left:735.85px;top:97.90px;font-size:7.2px;line-height:9.0px;color:#222;transform:scaleX(0.9000);">9</span>
<span class="t" style="left:328.30px;top:97.90px;font-size:7.2px;line-height:9.0px;color:#222;transform:scaleX(0.9253);">10</span>
<span class="t" style="left:755.30px;top:97.90px;font-size:7.2px;line-height:9.0px;color:#222;transform:scaleX(0.9253);">10</span>
<span class="t" style="left:306.95px;top:97.90px;font-size:7.2px;line-height:9.0px;color:#222;transform:scaleX(0.9916);">11</span>
<span class="t" style="left:776.65px;top:97.90px;font-size:7.2px;line-height:9.0px;color:#222;transform:scaleX(0.9916);">11</span>
<span class="t" style="left:285.60px;top:97.90px;font-size:7.2px;line-height:9.0px;color:#222;transform:scaleX(0.9253);">12</span>
<span class="t" style="left:798.00px;top:97.90px;font-size:7.2px;line-height:9.0px;color:#222;transform:scaleX(0.9253);">12</span>
<span class="t" style="left:264.25px;top:97.90px;font-size:7.2px;line-height:9.0px;color:#222;transform:scaleX(0.9253);">13</span>
<span class="t" style="left:819.35px;top:97.90px;font-size:7.2px;line-height:9.0px;color:#222;transform:scaleX(0.9253);">13</span>
<span class="t" style="left:242.90px;top:97.90px;font-size:7.2px;line-height:9.0px;color:#222;transform:scaleX(0.9253);">14</span>
<span class="t" style="left:840.70px;top:97.90px;font-size:7.2px;line-height:9.0px;color:#222;transform:scaleX(0.9253);">14</span>
<span class="t" style="left:221.55px;top:97.90px;font-size:7.2px;line-height:9.0px;color:#222;transform:scaleX(0.9253);">15</span>
<span class="t" style="left:862.05px;top:97.90px;font-size:7.2px;line-height:9.0px;color:#222;transform:scaleX(0.9253);">15</span>
<span class="t" style="left:200.20px;top:97.90px;font-size:7.2px;line-height:9.0px;color:#222;transform:scaleX(0.9253);">16</span>
<span class="t" style="left:883.40px;top:97.90px;font-size:7.2px;line-height:9.0px;color:#222;transform:scaleX(0.9253);">16</span>
<span class="t" style="left:543.70px;top:97.90px;font-size:7.2px;line-height:9.0px;color:#222;transform:scaleX(0.9000);">0</span>
<div class="a" style="left:528px;top:78.5px;width:238.5px;height:67.1px;background:#fff;border:1px solid #CDCDCD;box-shadow:0.5px 1px 2px rgba(0,0,0,0.13);"></div>
<div class="a" style="left:529px;top:79.3px;width:237px;height:14.5px;background:#C6C6C6;"></div>
<svg class="a" style="left:531.4px;top:82px" width="9.6" height="9.3" viewBox="0 0 11 10" preserveAspectRatio="none"><rect x="0.3" y="0.3" width="5" height="5" fill="#44546A"/><rect x="5.3" y="0.3" width="5" height="5" fill="#E7E6E6"/><rect x="0.3" y="5" width="5" height="4.6" fill="#4472C4"/><rect x="5.3" y="5" width="5" height="4.6" fill="#ED7D31"/></svg>
<div class="a" style="left:531px;top:96.3px;width:9.8px;height:9.6px;border:1px solid #62626e;background:#fff"></div>
<svg class="a" style="left:531px;top:111px" width="10" height="10" viewBox="0 0 10 10"><rect x="0.4" y="0.4" width="9.2" height="9.2" fill="#fff" stroke="#5a6aa0" stroke-width="0.7"/><circle cx="5" cy="5" r="3.6" fill="#8EA2D8"/></svg>
<svg class="a" style="left:530.5px;top:124.5px" width="11" height="11" viewBox="0 0 11 11"><path d="M4.5 0.8 H8.6 L10.2 2.4 V9.8 H4.5 Z" fill="#e6ecf7" stroke="#8c97ab" stroke-width="0.6"/><path d="M0.8 5.6 L3.8 2.6 L7 5.8 L4 8.8 Z" fill="#fff" stroke="#555" stroke-width="0.7"/><path d="M3 3.6 C2.6 1.6 4.8 1.6 4.6 4" fill="none" stroke="#555" stroke-width="0.6"/><path d="M7.4 6.4 C8.2 7.6 8.2 8.4 7.4 8.8 C6.6 8.4 6.6 7.6 7.4 6.4Z" fill="#4f83d1"/></svg>
<svg class="a" style="left:757px;top:84.0px" width="4" height="5" viewBox="0 0 4 5"><path d="M0.6 0.4 L3.2 2.5 L0.6 4.6Z" fill="#555"/></svg>
<svg class="a" style="left:757px;top:98.8px" width="4" height="5" viewBox="0 0 4 5"><path d="M0.6 0.4 L3.2 2.5 L0.6 4.6Z" fill="#555"/></svg>
<svg class="a" style="left:757px;top:113.5px" width="4" height="5" viewBox="0 0 4 5"><path d="M0.6 0.4 L3.2 2.5 L0.6 4.6Z" fill="#555"/></svg>
<svg class="a" style="left:757px;top:127.80000000000001px" width="4" height="5" viewBox="0 0 4 5"><path d="M0.6 0.4 L3.2 2.5 L0.6 4.6Z" fill="#555"/></svg>
<div class="a" style="left:763px;top:139px;width:1px;height:1px;background:#9a9a9a"></div><div class="a" style="left:760.5px;top:141.5px;width:1px;height:1px;background:#9a9a9a"></div><div class="a" style="left:763px;top:141.5px;width:1px;height:1px;background:#9a9a9a"></div>
<div class="a" style="left:765.4px;top:79.4px;width:146.9px;height:320.6px;background:#fff;border:1px solid #D2D2D2;box-shadow:0.5px 1px 2px rgba(0,0,0,0.13);"></div>
<div class="a" style="left:767px;top:80.3px;width:134.5px;height:13.7px;background:#EEEEEE;"></div>
<div class="a" style="left:767px;top:94.2px;width:134px;height:11.6px;background:#C6C6C6;"></div>
<div class="a" style="left:901.5px;top:80.3px;width:9.8px;height:282.7px;background:#F0F0F0;"></div>
<div class="a" style="left:902px;top:81.8px;width:9px;height:8.8px;background:#fff;border:1px solid #ABABAB;"></div>
<div class="a" style="left:902px;top:130.5px;width:9px;height:216.7px;background:#fff;border:1px solid #ABABAB;"></div>
<div class="a" style="left:902px;top:354.4px;width:9px;height:8.0px;background:#fff;border:1px solid #ABABAB;"></div>
<svg class="a" style="left:902px;top:81.8px" width="9" height="9" viewBox="0 0 9 9"><path d="M2.6 5.4 L4.5 3.4 L6.4 5.4Z" fill="#555"/></svg>
<svg class="a" style="left:902px;top:354.2px" width="9" height="9" viewBox="0 0 9 9"><path d="M2.6 3.4 L4.5 5.4 L6.4 3.4Z" fill="#555"/></svg>
<div class="a" style="left:767px;top:364.3px;width:144.3px;height:0.9px;background:#E1E1E1;"></div>
<div class="sw" style="top:96.70px"><i style="left:0.0px;background:#44546A"></i><i style="left:7.9px;background:#E7E6E6"></i><i style="left:15.8px;background:#4472C4"></i><i style="left:23.7px;background:#ED7D31"></i><i style="left:31.6px;background:#A5A5A5"></i><i style="left:39.5px;background:#FFC000"></i><i style="left:47.4px;background:#5B9BD5"></i><i style="left:55.3px;background:#70AD47"></i></div>
<div class="sw" style="top:108.84px"><i style="left:0.0px;background:#1F497D"></i><i style="left:7.9px;background:#EEECE1"></i><i style="left:15.8px;background:#4F81BD"></i><i style="left:23.7px;background:#C0504D"></i><i style="left:31.6px;background:#9BBB59"></i><i style="left:39.5px;background:#8064A2"></i><i style="left:47.4px;background:#4BACC6"></i><i style="left:55.3px;background:#F79646"></i></div>
<div class="sw" style="top:120.99px"><i style="left:0.0px;background:#000000"></i><i style="left:7.9px;background:#F8F8F8"></i><i style="left:15.8px;background:#DDDDDD"></i><i style="left:23.7px;background:#B2B2B2"></i><i style="left:31.6px;background:#969696"></i><i style="left:39.5px;background:#808080"></i><i style="left:47.4px;background:#5F5F5F"></i><i style="left:55.3px;background:#4D4D4D"></i></div>
<div class="sw" style="top:133.13px"><i style="left:0.0px;background:#242852"></i><i style="left:7.9px;background:#ACCBF9"></i><i style="left:15.8px;background:#4A66AC"></i><i style="left:23.7px;background:#629DD1"></i><i style="left:31.6px;background:#297FD5"></i><i style="left:39.5px;background:#7F8FA9"></i><i style="left:47.4px;background:#5AA2AE"></i><i style="left:55.3px;background:#9D90A0"></i></div>
<div class="sw" style="top:145.27px"><i style="left:0.0px;background:#17406D"></i><i style="left:7.9px;background:#DBEFF9"></i><i style="left:15.8px;background:#0F6FC6"></i><i style="left:23.7px;background:#009DD9"></i><i style="left:31.6px;background:#0BD0D9"></i><i style="left:39.5px;background:#10CF9B"></i><i style="left:47.4px;background:#7CCA62"></i><i style="left:55.3px;background:#A5C249"></i></div>
<div class="sw" style="top:157.41px"><i style="left:0.0px;background:#335B74"></i><i style="left:7.9px;background:#DFE3E5"></i><i style="left:15.8px;background:#1CADE4"></i><i style="left:23.7px;background:#2683C6"></i><i style="left:31.6px;background:#27CED7"></i><i style="left:39.5px;background:#42BA97"></i><i style="left:47.4px;background:#3E8853"></i><i style="left:55.3px;background:#62A39F"></i></div>
<div class="sw" style="top:169.56px"><i style="left:0.0px;background:#373545"></i><i style="left:7.9px;background:#CEDBE6"></i><i style="left:15.8px;background:#3494BA"></i><i style="left:23.7px;background:#58B6C0"></i><i style="left:31.6px;background:#75BDA7"></i><i style="left:39.5px;background:#7A8C8E"></i><i style="left:47.4px;background:#84ACB6"></i><i style="left:55.3px;background:#2683C6"></i></div>
<div class="sw" style="top:181.70px"><i style="left:0.0px;background:#455F51"></i><i style="left:7.9px;background:#E3DED1"></i><i style="left:15.8px;background:#549E39"></i><i style="left:23.7px;background:#8AB833"></i><i style="left:31.6px;background:#C0CF3A"></i><i style="left:39.5px;background:#029676"></i><i style="left:47.4px;background:#4AB5C4"></i><i style="left:55.3px;background:#0989B1"></i></div>
<div class="sw" style="top:193.84px"><i style="left:0.0px;background:#455F51"></i><i style="left:7.9px;background:#E2DFCC"></i><i style="left:15.8px;background:#99CB38"></i><i style="left:23.7px;background:#63A537"></i><i style="left:31.6px;background:#37A76F"></i><i style="left:39.5px;background:#44C1A3"></i><i style="left:47.4px;background:#4EB3CF"></i><i style="left:55.3px;background:#51C3F9"></i></div>
<div class="sw" style="top:205.99px"><i style="left:0.0px;background:#39302A"></i><i style="left:7.9px;background:#E5DEDB"></i><i style="left:15.8px;background:#FFCA08"></i><i style="left:23.7px;background:#F8931D"></i><i style="left:31.6px;background:#CE8D3E"></i><i style="left:39.5px;background:#EC7016"></i><i style="left:47.4px;background:#E64823"></i><i style="left:55.3px;background:#9C6A6A"></i></div>
<div class="sw" style="top:218.13px"><i style="left:0.0px;background:#4E3B30"></i><i style="left:7.9px;background:#FBEEC9"></i><i style="left:15.8px;background:#F0A22E"></i><i style="left:23.7px;background:#A5644E"></i><i style="left:31.6px;background:#B58B80"></i><i style="left:39.5px;background:#C3986D"></i><i style="left:47.4px;background:#A19574"></i><i style="left:55.3px;background:#C17529"></i></div>
<div class="sw" style="top:230.27px"><i style="left:0.0px;background:#637052"></i><i style="left:7.9px;background:#CCDDEA"></i><i style="left:15.8px;background:#E48312"></i><i style="left:23.7px;background:#BD582C"></i><i style="left:31.6px;background:#865640"></i><i style="left:39.5px;background:#9B8357"></i><i style="left:47.4px;background:#C2BC80"></i><i style="left:55.3px;background:#94A088"></i></div>
<div class="sw" style="top:242.42px"><i style="left:0.0px;background:#696464"></i><i style="left:7.9px;background:#E9E5DC"></i><i style="left:15.8px;background:#D34817"></i><i style="left:23.7px;background:#9B2D1F"></i><i style="left:31.6px;background:#A28E6A"></i><i style="left:39.5px;background:#956251"></i><i style="left:47.4px;background:#918485"></i><i style="left:55.3px;background:#855D5D"></i></div>
<div class="sw" style="top:254.56px"><i style="left:0.0px;background:#505046"></i><i style="left:7.9px;background:#EEECE1"></i><i style="left:15.8px;background:#E84C22"></i><i style="left:23.7px;background:#FFBD47"></i><i style="left:31.6px;background:#B64926"></i><i style="left:39.5px;background:#FF8427"></i><i style="left:47.4px;background:#CC9900"></i><i style="left:55.3px;background:#B22600"></i></div>
<div class="sw" style="top:266.70px"><i style="left:0.0px;background:#323232"></i><i style="left:7.9px;background:#E5C243"></i><i style="left:15.8px;background:#A5300F"></i><i style="left:23.7px;background:#D55816"></i><i style="left:31.6px;background:#E19825"></i><i style="left:39.5px;background:#B19C7D"></i><i style="left:47.4px;background:#7F5F52"></i><i style="left:55.3px;background:#B27D49"></i></div>
<div class="sw" style="top:278.85px"><i style="left:0.0px;background:#454551"></i><i style="left:7.9px;background:#D8D9DC"></i><i style="left:15.8px;background:#E32D91"></i><i style="left:23.7px;background:#C830CC"></i><i style="left:31.6px;background:#4EA6DC"></i><i style="left:39.5px;background:#4775E7"></i><i style="left:47.4px;background:#8971E1"></i><i style="left:55.3px;background:#D54773"></i></div>
<div class="sw" style="top:290.99px"><i style="left:0.0px;background:#373545"></i><i style="left:7.9px;background:#DCD8DC"></i><i style="left:15.8px;background:#AD84C6"></i><i style="left:23.7px;background:#8784C7"></i><i style="left:31.6px;background:#5D739A"></i><i style="left:39.5px;background:#6997AF"></i><i style="left:47.4px;background:#84ACB6"></i><i style="left:55.3px;background:#6F8183"></i></div>
<div class="sw" style="top:303.13px"><i style="left:0.0px;background:#632E62"></i><i style="left:7.9px;background:#EAE5EB"></i><i style="left:15.8px;background:#92278F"></i><i style="left:23.7px;background:#9B57D3"></i><i style="left:31.6px;background:#755DD9"></i><i style="left:39.5px;background:#665EB8"></i><i style="left:47.4px;background:#45A5ED"></i><i style="left:55.3px;background:#5982DB"></i></div>
<div class="sw" style="top:315.27px"><i style="left:0.0px;background:#775F55"></i><i style="left:7.9px;background:#EBDDC3"></i><i style="left:15.8px;background:#94B6D2"></i><i style="left:23.7px;background:#DD8047"></i><i style="left:31.6px;background:#A5AB81"></i><i style="left:39.5px;background:#D8B25C"></i><i style="left:47.4px;background:#7BA79D"></i><i style="left:55.3px;background:#968C8C"></i></div>
<div class="sw" style="top:327.42px"><i style="left:0.0px;background:#444D26"></i><i style="left:7.9px;background:#FEFAC9"></i><i style="left:15.8px;background:#A5B592"></i><i style="left:23.7px;background:#F3A447"></i><i style="left:31.6px;background:#E7BC29"></i><i style="left:39.5px;background:#D092A7"></i><i style="left:47.4px;background:#9C85C0"></i><i style="left:55.3px;background:#809EC2"></i></div>
<div class="sw" style="top:339.56px"><i style="left:0.0px;background:#5E5E5E"></i><i style="left:7.9px;background:#DDDDDD"></i><i style="left:15.8px;background:#418AB3"></i><i style="left:23.7px;background:#A6B727"></i><i style="left:31.6px;background:#F69200"></i><i style="left:39.5px;background:#838383"></i><i style="left:47.4px;background:#FEC306"></i><i style="left:55.3px;background:#DF5327"></i></div>
<div class="sw" style="top:351.70px"><i style="left:0.0px;background:#212745"></i><i style="left:7.9px;background:#B4DCFA"></i><i style="left:15.8px;background:#4E67C8"></i><i style="left:23.7px;background:#5ECCF3"></i><i style="left:31.6px;background:#A7EA52"></i><i style="left:39.5px;background:#5DCEAF"></i><i style="left:47.4px;background:#FF8021"></i><i style="left:55.3px;background:#F14124"></i></div>
<span class="t" style="left:840.60px;top:95.70px;font-size:8px;line-height:10.0px;color:#444;transform:scaleX(0.9155);">Office</span>
<span class="t" style="left:840.60px;top:107.84px;font-size:8px;line-height:10.0px;color:#444;transform:scaleX(0.8577);">Office 2007 - 2010</span>
<span class="t" style="left:840.60px;top:119.99px;font-size:8px;line-height:10.0px;color:#444;transform:scaleX(0.8287);">Grayscale</span>
<span class="t" style="left:840.60px;top:132.13px;font-size:8px;line-height:10.0px;color:#444;transform:scaleX(0.8737);">Blue Warm</span>
<span class="t" style="left:840.60px;top:144.27px;font-size:8px;line-height:10.0px;color:#444;transform:scaleX(0.7970);">Blue</span>
<span class="t" style="left:840.60px;top:156.41px;font-size:8px;line-height:10.0px;color:#444;transform:scaleX(0.8461);">Blue II</span>
<span class="t" style="left:840.60px;top:168.56px;font-size:8px;line-height:10.0px;color:#444;transform:scaleX(0.8521);">Blue Green</span>
<span class="t" style="left:840.60px;top:180.70px;font-size:8px;line-height:10.0px;color:#444;transform:scaleX(0.8308);">Green</span>
<span class="t" style="left:840.60px;top:192.84px;font-size:8px;line-height:10.0px;color:#444;transform:scaleX(0.8693);">Green Yellow</span>
<span class="t" style="left:840.60px;top:204.99px;font-size:8px;line-height:10.0px;color:#444;transform:scaleX(0.9109);">Yellow</span>
<span class="t" style="left:840.60px;top:217.13px;font-size:8px;line-height:10.0px;color:#444;transform:scaleX(0.8893);">Yellow Orange</span>
<span class="t" style="left:840.60px;top:229.27px;font-size:8px;line-height:10.0px;color:#444;transform:scaleX(0.8555);">Orange</span>
<span class="t" style="left:840.60px;top:241.42px;font-size:8px;line-height:10.0px;color:#444;transform:scaleX(0.8648);">Orange Red</span>
<span class="t" style="left:840.60px;top:253.56px;font-size:8px;line-height:10.0px;color:#444;transform:scaleX(0.8497);">Red Orange</span>
<span class="t" style="left:840.60px;top:265.70px;font-size:8px;line-height:10.0px;color:#444;transform:scaleX(0.8224);">Red</span>
<span class="t" style="left:840.60px;top:277.85px;font-size:8px;line-height:10.0px;color:#444;transform:scaleX(0.8364);">Red Violet</span>
<span class="t" style="left:840.60px;top:289.99px;font-size:8px;line-height:10.0px;color:#444;transform:scaleX(0.8767);">Violet</span>
<span class="t" style="left:840.60px;top:302.13px;font-size:8px;line-height:10.0px;color:#444;transform:scaleX(0.8855);">Violet II</span>
<span class="t" style="left:840.60px;top:314.27px;font-size:8px;line-height:10.0px;color:#444;transform:scaleX(0.9267);">Median</span>
<span class="t" style="left:840.60px;top:326.42px;font-size:8px;line-height:10.0px;color:#444;transform:scaleX(0.8347);">Paper</span>
<span class="t" style="left:840.60px;top:338.56px;font-size:8px;line-height:10.0px;color:#444;transform:scaleX(0.8809);">Marquee</span>
<span class="t" style="left:840.60px;top:350.70px;font-size:8px;line-height:10.0px;color:#444;transform:scaleX(0.8551);">Slipstream</span>
<span class="t" style="left:772.60px;top:81.50px;font-size:8px;line-height:10.0px;color:#333;transform:scaleX(0.9953);">Office</span>
<span class="t" style="left:786.70px;top:368.20px;font-size:8px;line-height:10.0px;color:#444;transform:scaleX(0.8811);"><u>C</u>ustomize Colors...</span>
<span class="t" style="left:786.70px;top:382.60px;font-size:8px;line-height:10.0px;color:#A6A6A6;transform:scaleX(0.8643);"><u>R</u>eset Slide Theme Colors</span>
<span class="t" style="left:832.60px;top:389.30px;font-size:8px;line-height:10.0px;color:#aaa;transform:scaleX(1.3152);">....</span>
<span class="t" style="left:548.70px;top:82.00px;font-size:8px;line-height:10.0px;color:#333;transform:scaleX(0.8695);"><u>C</u>olors</span>
<span class="t" style="left:548.70px;top:96.60px;font-size:8px;line-height:10.0px;color:#444;transform:scaleX(0.8547);"><u>F</u>onts</span>
<span class="t" style="left:548.70px;top:111.50px;font-size:8px;line-height:10.0px;color:#8a8a8a;transform:scaleX(0.8557);"><u>E</u>ffects</span>
<span class="t" style="left:548.70px;top:126.00px;font-size:8px;line-height:10.0px;color:#444;transform:scaleX(0.8770);"><u>B</u>ackground Styles</span>
<span class="t" style="left:533.40px;top:96.67px;font-size:7.4px;line-height:9.25px;color:#444;transform:scaleX(1.0400);">A</span>
</div></body></html>
